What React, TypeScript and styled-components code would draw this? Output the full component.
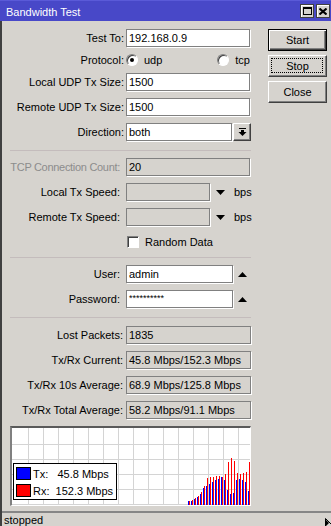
import React from 'react';
import styled, { createGlobalStyle } from 'styled-components';

const FONT = `"Liberation Sans", Arial, sans-serif`;

const GlobalStyle = createGlobalStyle`
  html, body {
    margin: 0;
    padding: 0;
    background: #d6d3ce;
  }
  body {
    font-family: ${FONT};
    font-size: 11px;
    color: #000;
  }
`;

// --- window chrome ---
const Window = styled.div`
  width: 331px;
  height: 526px;
  display: flex;
  flex-direction: column;
  background: #d6d3ce;
  position: relative;
  overflow: hidden;
`;

const TitleBar = styled.div`
  height: 21px;
  flex: none;
  box-sizing: border-box;
  background: #4848c8;
  border-top: 1px solid #5a5ad8;
  display: flex;
  align-items: center;
  justify-content: space-between;
  padding: 0 1px 0 6px;
  color: #fff;
`;

const TitleText = styled.span`
  font-size: 11px;
  padding-top: 1px;
`;

const TitleButtons = styled.div`
  display: flex;
  gap: 2px;
`;

const TitleButton = styled.div`
  width: 14px;
  height: 14px;
  box-sizing: border-box;
  background: #d6d3ce;
  border: 1px solid #404040;
  box-shadow: inset 1px 1px #fff;
  display: flex;
  align-items: center;
  justify-content: center;
`;

const Frame = styled.div`
  flex: 1;
  min-height: 0;
  display: flex;
  flex-direction: column;
  border-left: 2px solid #404040;
`;

const Body = styled.div`
  flex: 1;
  display: flex;
  padding: 8px 0 0 8px;
`;

// --- form ---
const Form = styled.div`
  width: 241px;
  display: flex;
  flex-direction: column;
  gap: 7px;
`;

const Row = styled.div<{ $h?: number }>`
  display: grid;
  grid-template-columns: 116px 125px;
  align-items: center;
  height: ${(p) => p.$h ?? 18}px;
`;

const Label = styled.div<{ $pr: number; $disabled?: boolean; $tight?: boolean }>`
  text-align: right;
  white-space: nowrap;
  padding-right: ${(p) => p.$pr}px;
  letter-spacing: ${(p) => (p.$tight ? '-0.3px' : 'normal')};
  color: ${(p) => (p.$disabled ? '#8c8c8c' : '#000')};
`;

const Field = styled.div<{ $spread?: boolean }>`
  display: flex;
  align-items: center;
  justify-content: ${(p) => (p.$spread ? 'space-between' : 'flex-start')};
  padding-right: ${(p) => (p.$spread ? 1 : 0)}px;
`;

const Edit = styled.div<{ $w?: number; $ro?: boolean; $small?: boolean }>`
  width: ${(p) => p.$w ?? 124}px;
  height: 18px;
  flex: none;
  box-sizing: border-box;
  border: 1px solid #808080;
  box-shadow: 1px 1px 0 #fff;
  background: ${(p) => (p.$ro ? '#d6d3ce' : '#fff')};
  padding: ${(p) => (p.$small ? '2px' : '0')} 2px 0;
  display: flex;
  align-items: ${(p) => (p.$small ? 'flex-start' : 'center')};
  white-space: nowrap;
  overflow: hidden;
  font-size: ${(p) => (p.$small ? 9 : 11)}px;
`;

const Option = styled.label`
  display: flex;
  align-items: center;
  gap: 6px;
`;

const Radio = styled.span<{ $on?: boolean }>`
  width: 12px;
  height: 12px;
  box-sizing: border-box;
  border-radius: 50%;
  background: #fff;
  border: 1px solid;
  border-color: #808080 #fff #fff #808080;
  box-shadow: inset 1px 1px #404040;
  display: flex;
  align-items: center;
  justify-content: center;

  &::after {
    content: '';
    width: 4px;
    height: 4px;
    border-radius: 50%;
    background: ${(p) => (p.$on ? '#000' : 'transparent')};
  }
`;

const Check = styled.span`
  width: 12px;
  height: 12px;
  box-sizing: border-box;
  background: #fff;
  border: 1px solid;
  border-color: #808080 #fff #fff #808080;
  box-shadow: inset 1px 1px #404040;
  margin-left: 1px;
`;

const ComboButton = styled.div`
  width: 18px;
  height: 18px;
  margin-left: 1px;
  box-sizing: border-box;
  border: 1px solid;
  border-color: #fff #404040 #404040 #fff;
  box-shadow: inset -1px -1px #808080;
  display: flex;
  align-items: center;
  justify-content: center;
`;

const Arrow = styled.svg<{ $ml: number }>`
  margin-left: ${(p) => p.$ml}px;
  flex: none;
`;

const Unit = styled.span`
  margin-left: 9px;
`;

const Separator = styled.div<{ $mt?: number; $mb?: number }>`
  height: 1px;
  background: #c4bcbc;
  margin: ${(p) => p.$mt ?? 0}px 0 ${(p) => p.$mb ?? 0}px;
`;

// --- graph ---
const Chart = styled.div`
  width: 241px;
  height: 80px;
  box-sizing: border-box;
  border-style: solid;
  border-width: 2px 1px 1px 2px;
  border-color: #5a5a5a #fff #fff #808080;
  background: #fff;
  position: relative;
`;

const Legend = styled.div`
  position: absolute;
  left: 1px;
  top: 35px;
  width: 104px;
  height: 37px;
  box-sizing: border-box;
  border: 1px solid #000;
  background: #fff;
  padding: 1px 0 0 2px;
  display: flex;
  flex-direction: column;
`;

const LegendRow = styled.div`
  height: 17px;
  display: flex;
  align-items: center;
  gap: 2px;
  white-space: pre;
`;

const Swatch = styled.span<{ $c: string }>`
  width: 15px;
  height: 13px;
  flex: none;
  box-sizing: border-box;
  border: 1px solid #000;
  background: ${(p) => p.$c};
`;

// --- buttons ---
const ButtonCol = styled.div`
  width: 59px;
  margin-left: 17px;
  display: flex;
  flex-direction: column;
  gap: 4px;
`;

const WinButton = styled.div<{ $default?: boolean; $focus?: boolean }>`
  height: 22px;
  box-sizing: border-box;
  position: relative;
  display: flex;
  align-items: center;
  justify-content: center;
  border: 1px solid;
  border-color: ${(p) => (p.$default ? '#000' : '#fff #404040 #404040 #fff')};
  box-shadow: ${(p) =>
    p.$default
      ? 'inset 1px 1px #fff, inset -1px -1px #404040, inset -2px -2px #808080'
      : 'inset -1px -1px #808080'};

  &::after {
    content: '';
    display: ${(p) => (p.$focus ? 'block' : 'none')};
    position: absolute;
    inset: 2px 3px 3px 2px;
    border: 1px dotted #000;
  }
`;

// --- status ---
const StatusBar = styled.div`
  height: 15px;
  flex: none;
  box-sizing: border-box;
  border-top: 2px solid #868686;
  padding-left: 2px;
  display: flex;
  align-items: center;
`;

const Pointer = styled.svg`
  position: absolute;
  left: 325px;
  top: 518px;
`;

const tx = [4, 4, 6, 8, 11, 17, 19, 21, 23, 25, 26, 28, 25, 15, 11, 12, 25, 26, 25, 23, 14];
const rx = [4, 5, 7, 9, 13, 19, 27, 28, 28, 29, 29, 28, 31, 43, 47, 44, 32, 31, 32, 33, 43];

const Graph: React.FC = () => {
  const w = 238;
  const h = 77;
  const vlines = Array.from({ length: 15 }, (_, i) => 16 + i * 15);
  const hlines = [16, 31, 46, 61, 76];
  return (
    <svg width={w} height={h} style={{ display: 'block' }}>
      {vlines.map((x) => (
        <line key={'v' + x} x1={x + 0.5} y1={0} x2={x + 0.5} y2={h} stroke="#d4d4d4" />
      ))}
      {hlines.map((y) => (
        <line key={'h' + y} x1={0} y1={y + 0.5} x2={w} y2={y + 0.5} stroke="#d4d4d4" />
      ))}
      {tx.map((v, i) => (
        <g key={i}>
          <rect x={176 + i * 3} y={h - v} width={1} height={v} fill="#0000ff" />
          <rect x={177 + i * 3} y={h - rx[i]} width={1} height={rx[i]} fill="#ff0000" />
        </g>
      ))}
    </svg>
  );
};

const Down = ({ ml }: { ml: number }) => (
  <Arrow $ml={ml} width="9" height="5" viewBox="0 0 9 5">
    <polygon points="0,0 9,0 4.5,5" fill="#000" />
  </Arrow>
);

const Up = ({ ml }: { ml: number }) => (
  <Arrow $ml={ml} width="9" height="5" viewBox="0 0 9 5">
    <polygon points="0,5 9,5 4.5,0" fill="#000" />
  </Arrow>
);

export default function App() {
  return (
    <Window>
      <GlobalStyle />
      <TitleBar>
        <TitleText>Bandwidth Test</TitleText>
        <TitleButtons>
          <TitleButton>
            <svg width="9" height="8" viewBox="0 0 9 8">
              <rect x="0.5" y="0.5" width="8" height="7" fill="none" stroke="#000" />
              <rect x="0" y="0" width="9" height="2" fill="#000" />
            </svg>
          </TitleButton>
          <TitleButton>
            <svg width="8" height="7" viewBox="0 0 8 7">
              <path d="M0.5 0.5 L7.5 6.5 M7.5 0.5 L0.5 6.5" stroke="#000" strokeWidth="2" />
            </svg>
          </TitleButton>
        </TitleButtons>
      </TitleBar>

      <Frame>
        <Body>
          <Form>
            <Row>
              <Label $pr={2}>Test To:</Label>
              <Field><Edit>192.168.0.9</Edit></Field>
            </Row>
            <Row $h={12}>
              <Label $pr={2}>Protocol:</Label>
              <Field $spread>
                <Option><Radio $on />udp</Option>
                <Option><Radio />tcp</Option>
              </Field>
            </Row>
            <Row>
              <Label $pr={2}>Local UDP Tx Size:</Label>
              <Field><Edit>1500</Edit></Field>
            </Row>
            <Row>
              <Label $pr={2}>Remote UDP Tx Size:</Label>
              <Field><Edit>1500</Edit></Field>
            </Row>
            <Row>
              <Label $pr={2}>Direction:</Label>
              <Field>
                <Edit $w={106}>both</Edit>
                <ComboButton>
                  <svg width="9" height="9" viewBox="0 0 9 9">
                    <rect x="1" y="0" width="7" height="1" fill="#000" />
                    <rect x="3" y="2" width="3" height="2" fill="#000" />
                    <polygon points="0.5,4 8.5,4 4.5,8" fill="#000" />
                  </svg>
                </ComboButton>
              </Field>
            </Row>

            <Separator $mt={2} />

            <Row>
              <Label $pr={6} $disabled $tight>TCP Connection Count:</Label>
              <Field><Edit $ro>20</Edit></Field>
            </Row>
            <Row>
              <Label $pr={6}>Local Tx Speed:</Label>
              <Field>
                <Edit $ro $w={84} />
                <Down ml={6} />
                <Unit>bps</Unit>
              </Field>
            </Row>
            <Row>
              <Label $pr={6}>Remote Tx Speed:</Label>
              <Field>
                <Edit $ro $w={84} />
                <Down ml={6} />
                <Unit>bps</Unit>
              </Field>
            </Row>
            <Row $h={17}>
              <span />
              <Field>
                <Option><Check />Random Data</Option>
              </Field>
            </Row>

            <Separator />

            <Row>
              <Label $pr={6}>User:</Label>
              <Field>
                <Edit $w={107}>admin</Edit>
                <Up ml={5} />
              </Field>
            </Row>
            <Row>
              <Label $pr={6}>Password:</Label>
              <Field>
                <Edit $w={107} $small>**********</Edit>
                <Up ml={5} />
              </Field>
            </Row>

            <Separator $mt={2} $mb={1} />

            <Row>
              <Label $pr={3}>Lost Packets:</Label>
              <Field><Edit $ro $w={125}>1835</Edit></Field>
            </Row>
            <Row>
              <Label $pr={3}>Tx/Rx Current:</Label>
              <Field><Edit $ro $w={125}>45.8 Mbps/152.3 Mbps</Edit></Field>
            </Row>
            <Row>
              <Label $pr={3}>Tx/Rx 10s Average:</Label>
              <Field><Edit $ro $w={125}>68.9 Mbps/125.8 Mbps</Edit></Field>
            </Row>
            <Row>
              <Label $pr={3}>Tx/Rx Total Average:</Label>
              <Field><Edit $ro $w={125}>58.2 Mbps/91.1 Mbps</Edit></Field>
            </Row>

            <Chart>
              <Graph />
              <Legend>
                <LegendRow><Swatch $c="#0000ff" />{'Tx:   45.8 Mbps'}</LegendRow>
                <LegendRow><Swatch $c="#ff0000" />{'Rx:  152.3 Mbps'}</LegendRow>
              </Legend>
            </Chart>
          </Form>

          <ButtonCol>
            <WinButton $default>Start</WinButton>
            <WinButton $focus>Stop</WinButton>
            <WinButton>Close</WinButton>
          </ButtonCol>
        </Body>
        <StatusBar>stopped</StatusBar>
      </Frame>

      <Pointer width="6" height="8" viewBox="0 0 6 8">
        <path d="M0.5 0.5 L0.5 8 M0.5 0.5 L6 6" stroke="#000" fill="none" />
        <path d="M1 2 L1 8 L4 5 Z" fill="#000" />
      </Pointer>
    </Window>
  );
}
